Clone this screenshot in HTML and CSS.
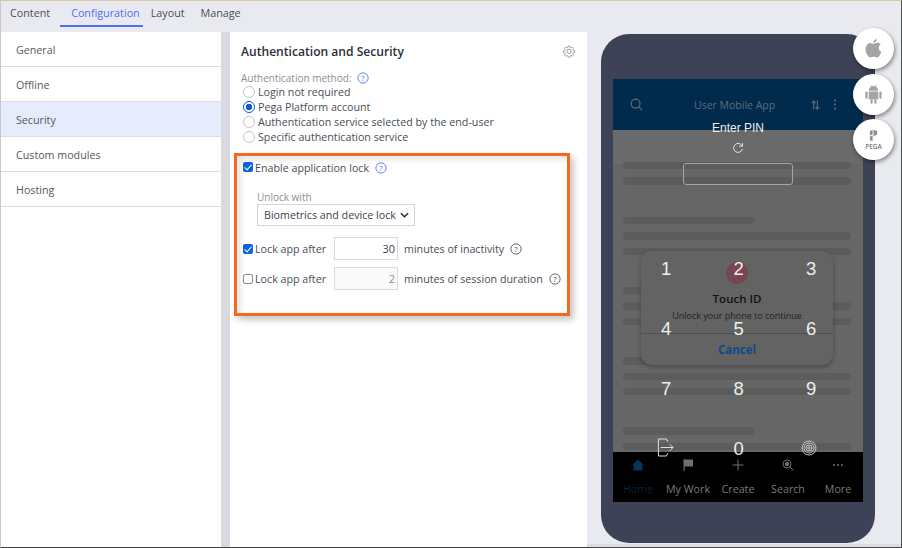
FILE: index.html
```html
<!DOCTYPE html>
<html lang="en">
<head>
    <meta charset="UTF-8">
    <title>Security</title>
    <link rel="stylesheet" href="styles.css">
</head>
<body>
    <div class="frame">
        <nav class="tabs">
            <a class="tab">Content</a>
            <a class="tab tab-active">Configuration</a>
            <a class="tab">Layout</a>
            <a class="tab">Manage</a>
        </nav>

        <div class="main">
            <ul class="side">
                <li>General</li>
                <li>Offline</li>
                <li class="side-active">Security</li>
                <li>Custom modules</li>
                <li>Hosting</li>
            </ul>

            <section class="panel">
                <div class="panel-head">
                    <h2>Authentication and Security</h2>
                    <svg class="gear" viewBox="0 0 24 24" fill="none" stroke="#8b8e96" stroke-width="1.5">
                        <path d="M10.3 2.5h3.4l.5 2.7 1.9.8 2.3-1.6 2.4 2.4-1.6 2.3.8 1.9 2.7.5v3.4l-2.7.5-.8 1.9 1.6 2.3-2.4 2.4-2.3-1.6-1.9.8-.5 2.7h-3.4l-.5-2.7-1.9-.8-2.3 1.6-2.4-2.4 1.6-2.3-.8-1.9-2.7-.5v-3.4l2.7-.5.8-1.9-1.6-2.3 2.4-2.4 2.3 1.6 1.9-.8z" transform="translate(1.2 1.2) scale(.9)"/>
                        <circle cx="12" cy="12.5" r="3.6"/>
                    </svg>
                </div>

                <div class="method-label">Authentication method:
                    <svg class="help help-blue" viewBox="0 0 14 14"><circle cx="7" cy="7" r="6"/><text x="7" y="10.2">?</text></svg>
                </div>
                <div class="radio-row"><span class="radio"></span>Login not required</div>
                <div class="radio-row"><span class="radio radio-on"></span>Pega Platform account</div>
                <div class="radio-row"><span class="radio"></span>Authentication service selected by the end-user</div>
                <div class="radio-row"><span class="radio"></span>Specific authentication service</div>

                <div class="lock-box">
                    <div class="check-row">
                        <span class="check check-on"></span>Enable application lock
                        <svg class="help help-blue help-gap" viewBox="0 0 14 14"><circle cx="7" cy="7" r="6"/><text x="7" y="10.2">?</text></svg>
                    </div>
                    <div class="unlock">
                        <div class="unlock-label">Unlock with</div>
                        <div class="select">Biometrics and device lock
                            <svg class="chev" viewBox="0 0 10 6"><path d="M1 1l4 4 4-4" fill="none" stroke="#1f2430" stroke-width="1.5"/></svg>
                        </div>
                    </div>
                    <div class="lock-row lock-first">
                        <span class="check check-on"></span><span class="lock-text">Lock app after</span>
                        <span class="num">30</span>
                        <span>minutes of inactivity</span>
                        <svg class="help help-dark" viewBox="0 0 14 14"><circle cx="7" cy="7" r="6"/><text x="7" y="10.2">?</text></svg>
                    </div>
                    <div class="lock-row">
                        <span class="check"></span><span class="lock-text">Lock app after</span>
                        <span class="num num-off">2</span>
                        <span>minutes of session duration</span>
                        <svg class="help help-dark" viewBox="0 0 14 14"><circle cx="7" cy="7" r="6"/><text x="7" y="10.2">?</text></svg>
                    </div>
                </div>
            </section>

            <section class="preview">
                <div class="phone">
                    <div class="screen">
                        <div class="app-bar">
                            <svg class="bar-search" viewBox="0 0 14 14" fill="none" stroke="#5d6b78" stroke-width="1.3"><circle cx="6" cy="6" r="4.8"/><path d="M9.5 9.5l3.500 3.500"/></svg>
                            <span class="app-title">User Mobile App</span>
                            <svg class="bar-sync" viewBox="0 0 10 12" fill="none" stroke="#5d6b78" stroke-width="1.2"><path d="M3 11V2M1 4l2-2.500L5 4M7 1v9M5 8l2 2.500L9 8"/></svg>
                            <svg class="bar-dots" viewBox="0 0 4 12" fill="#5d6b78"><circle cx="2" cy="1.500" r="1.100"/><circle cx="2" cy="6" r="1.100"/><circle cx="2" cy="10.500" r="1.100"/></svg>
                        </div>
                        <div class="page">
                            <div class="skeleton">
                                <i></i><i></i>
                                <i class="sk-short sk-gap"></i><i></i><i></i>
                                <i class="sk-short sk-gap"></i><i></i><i></i>
                                <i class="sk-short sk-gap"></i><i></i><i></i>
                                <i class="sk-short sk-gap"></i><i></i>
                            </div>
                        </div>
                        <div class="tabbar">
                            <div class="tb tb-home">
                                <svg viewBox="0 0 12 12" fill="#04365c"><path d="M6 .5L11.500 6H10.400v5.500H1.600V6H.5z"/></svg>
                                <span>Home</span>
                            </div>
                            <div class="tb">
                                <svg viewBox="0 0 12 12" fill="#6f6f6f"><path d="M1.500 0h1.200v12H1.500zM2.700 .5H11v7H2.700z"/></svg>
                                <span>My Work</span>
                            </div>
                            <div class="tb">
                                <svg viewBox="0 0 12 12" fill="#6f6f6f"><path d="M5.500 .5h1v5h5v1h-5v5h-1v-5h-5v-1h5z"/></svg>
                                <span>Create</span>
                            </div>
                            <div class="tb">
                                <svg viewBox="0 0 12 12" fill="none" stroke="#6f6f6f"><circle cx="5" cy="5" r="4"/><circle cx="5" cy="5" r="2.200" fill="#6f6f6f" stroke="none"/><path d="M8 8l3.500 3.500"/></svg>
                                <span>Search</span>
                            </div>
                            <div class="tb">
                                <svg viewBox="0 0 12 12" fill="#6f6f6f"><circle cx="2" cy="6" r="1"/><circle cx="6" cy="6" r="1"/><circle cx="10" cy="6" r="1"/></svg>
                                <span>More</span>
                            </div>
                        </div>

                        <div class="touch">
                            <span class="touch-dot"></span>
                            <div class="touch-title">Touch ID</div>
                            <div class="touch-sub">Unlock your phone to continue</div>
                            <div class="touch-cancel">Cancel</div>
                        </div>

                        <div class="pin">
                            <div class="pin-title">Enter PIN</div>
                            <svg class="pin-refresh" viewBox="0 0 12 12" fill="none" stroke="#e4e4e4" stroke-width="1"><path d="M10.200 4A4.500 4.500 0 1 0 10.500 7"/><path d="M10.500 1v3.300H7.200" stroke-width=".9"/></svg>
                            <div class="pin-input"></div>
                            <div class="keys">
                                <span>1</span><span>2</span><span>3</span>
                                <span>4</span><span>5</span><span>6</span>
                                <span>7</span><span>8</span><span>9</span>
                                <span>
                                    <svg class="key-exit" viewBox="0 0 18 20" fill="none" stroke="#e8e8e8" stroke-width="1"><path d="M10 1H1.500v18H10M10 1l1.500 3M10 19l1.500-3M4 10h13M13.500 6.500L17 10l-3.500 3.500"/></svg>
                                </span>
                                <span>0</span>
                                <span>
                                    <svg class="key-finger" viewBox="0 0 16 16" fill="none" stroke="#c4c4c4" stroke-width="1"><circle cx="8" cy="8" r="7"/><circle cx="8" cy="8" r="5"/><circle cx="8" cy="8" r="3"/><circle cx="8" cy="8" r="1.200"/></svg>
                                </span>
                            </div>
                        </div>
                    </div>
                </div>

                <div class="os-list">
                    <div class="os">
                        <svg class="os-apple" viewBox="0 0 16 18" fill="#a4a4a4"><path d="M11.200 0c.1 1.800-1.500 3.700-3.400 3.600C7.600 1.900 9.400.1 11.200 0zM8 4.500c.8 0 2-1 3.500-1 1.200 0 2.500.6 3.300 1.800-2.800 1.700-2.300 5.700.7 6.900-.8 2-2.500 5.300-4.300 5.300-1.100 0-1.600-.7-3-.7s-1.900.7-3 .7C3 17.500.5 13.500.5 9.800.5 6 2.900 3.700 5 3.700c1.200 0 2.200.8 3 .8z"/></svg>
                    </div>
                    <div class="os">
                        <svg class="os-android" viewBox="0 0 16 18" fill="#a4a4a4"><path d="M3.500 6a4.500 4.500 0 0 1 9 0zM3.500 6.700h9v7.300h-1.700v3.200a1 1 0 0 1-2 0V14H7.200v3.200a1 1 0 0 1-2 0V14H3.500zM1.300 6.700a1 1 0 0 1 1.200 1v4.600a1 1 0 0 1-2.200 0V7.700a1 1 0 0 1 1-1zM14.700 6.700a1 1 0 0 1 1 1v4.600a1 1 0 0 1-2.200 0V7.700a1 1 0 0 1 1.200-1z"/><path d="M5 .3l1.200 2M11 .3L9.800 2.300" stroke="#a4a4a4" stroke-width=".7"/></svg>
                    </div>
                    <div class="os os-pega">
                        <svg class="os-p" viewBox="0 0 10 14" fill="#8f8f9c"><path d="M1 2l3-1.500V6L1 7zM5 .5L9 2v4L5 8zM1 8l3-1v6.500L1 12z"/></svg>
                        <span>PEGA</span>
                    </div>
                </div>
            </section>
        </div>
    </div>
</body>
</html>
```

FILE: styles.css
```css
* {
    box-sizing: border-box;
}
html, body {
    margin: 0;
    height: 100%;
}
body {
    font-family: "Open Sans", Arial, sans-serif;
    font-size: 10.7px;
    color: #4a4d57;
    background-color: #e9eaf0;
    overflow: hidden;
}
.frame {
    width: 902px;
    height: 548px;
    display: flex;
    flex-direction: column;
    border-top: 1px solid #d9c9a0;
    border-right: 1px solid #555;
    border-bottom: 1px solid #444;
    border-left: 1px solid #c8c8c8;
}

/* top tabs */
.tabs {
    height: 31px;
    display: flex;
    padding-left: 9px;
    font-size: 10.75px;
}
.tab {
    padding-top: 5px;
    height: 25.5px;
    margin-right: 16px;
}
.tab-active {
    color: #4f6df5;
    padding: 5px 3px 0 11px;
    margin-left: -6px;
    margin-right: 8px;
    border-bottom: 2px solid #4f6df5;
}

.main {
    flex: 1;
    display: flex;
    min-height: 0;
}

/* left list */
.side {
    width: 220px;
    margin: 0;
    padding: 0;
    list-style: none;
    background: #fff;
    color: #555862;
}
.side li {
    height: 35px;
    line-height: 36px;
    padding-left: 15px;
    border-bottom: 1px solid #dcdde2;
}
.side .side-active {
    background: #e6ecfb;
}

/* middle panel */
.panel {
    width: 357px;
    margin-left: 9px;
    background: #fff;
    padding: 0 11px;
    box-shadow: -9px 0 0 #d9dadf;
}
.panel-head {
    display: flex;
    justify-content: space-between;
    align-items: center;
    padding-top: 5px;
    height: 33px;
}
.panel-head h2 {
    margin: 0;
    font-size: 12.1px;
    font-weight: 600;
    color: #2b2e3a;
}
.gear {
    width: 14px;
    height: 14px;
}
.method-label {
    margin-top: 7px;
    font-size: 10px;
    color: #8c8e94;
    display: flex;
    align-items: center;
    gap: 5px;
    height: 12px;
}
.help {
    width: 12px;
    height: 12px;
    flex: none;
}
.help circle {
    fill: none;
    stroke-width: 1;
}
.help text {
    font-family: "Open Sans", Arial, sans-serif;
    font-size: 9px;
    text-anchor: middle;
}
.help-blue circle {
    stroke: #4f6df5;
}
.help-blue text {
    fill: #4f6df5;
}
.help-dark circle {
    stroke: #4a4d57;
}
.help-dark text {
    fill: #4a4d57;
}
.help-gap {
    margin-left: 6px;
}
.radio-row {
    height: 15px;
    display: flex;
    align-items: center;
    color: #4a4d57;
}
.radio {
    width: 12px;
    height: 12px;
    margin: 0 3px 0 2px;
    border: 1px solid #c4c5ca;
    border-radius: 50%;
    background: #fff;
}
.radio-on {
    border-color: #0a5fd8;
    background: radial-gradient(circle, #0a5fd8 0 3px, #fff 3.500px);
}

/* orange box */
.lock-box {
    margin: 9px 0 0 -7px;
    width: 336px;
    height: 163px;
    border: 3px solid #f26a21;
    box-shadow: 4px 4px 6px rgba(0, 0, 0, .22), inset 3px 3px 6px rgba(0, 0, 0, .12);
    padding: 3px 6px 0;
    white-space: nowrap;
}
.check-row {
    display: flex;
    align-items: center;
    height: 18px;
}
.check-row .check {
    margin-top: -3px;
}
.check {
    width: 10px;
    height: 10px;
    flex: none;
    margin-right: 2px;
    border: 1px solid #8a8a8a;
    border-radius: 2px;
    background: #fff;
    position: relative;
}
.check-on {
    border: none;
    background: #0a63e0;
}
.check-on::after {
    content: "";
    position: absolute;
    left: 3px;
    top: 1px;
    width: 3px;
    height: 6px;
    border: solid #fff;
    border-width: 0 1.500px 1.500px 0;
    transform: rotate(42deg);
}
.unlock {
    margin: 14px 0 0 14px;
}
.unlock-label {
    font-size: 10px;
    color: #8c8e94;
    line-height: 13px;
}
.select {
    width: 158px;
    height: 22px;
    padding: 0 5px 0 6px;
    border: 1px solid #d4d5d9;
    display: flex;
    align-items: center;
    justify-content: space-between;
    color: #3f424c;
}
.chev {
    width: 9px;
    height: 6px;
}
.lock-row {
    display: flex;
    align-items: center;
    height: 23px;
    margin-top: 7px;
}
.lock-first {
    margin-top: 11px;
}
.lock-text {
    width: 79px;
}
.num {
    width: 64px;
    height: 23px;
    margin-right: 6px;
    border: 1px solid #d9dade;
    text-align: right;
    line-height: 21px;
    padding-right: 2px;
    font-size: 11px;
    color: #3f424c;
}
.num-off {
    color: #8c8e94;
    background: #fafafa;
}
.lock-row .help {
    margin-left: 6px;
}

/* phone preview */
.preview {
    flex: 1;
    position: relative;
    border-bottom: 3px solid #dcdde2;
}
.phone {
    margin: 2px 0 0 14px;
    width: 274px;
    height: 509px;
    border-radius: 28px;
    background: #3d4256;
    padding: 45px 12px 0;
}
.screen {
    width: 250px;
    height: 423px;
    display: flex;
    flex-direction: column;
    position: relative;
    overflow: hidden;
}
.app-bar {
    height: 51px;
    background: #002b4d;
    display: flex;
    align-items: center;
    padding: 0 0 0 17px;
    color: #5f6d7b;
}
.bar-search {
    width: 13px;
    height: 13px;
}
.app-title {
    margin-left: 51px;
    width: 117px;
    font-size: 10.5px;
}
.bar-sync {
    width: 9px;
    height: 12px;
}
.bar-dots {
    width: 4px;
    height: 11px;
    margin-left: 13px;
}
.page {
    flex: 1;
    background: linear-gradient(#6a6a6a 0 34px, #666 34px);
    overflow: hidden;
    padding: 32px 12px 0 10px;
}
.skeleton {
    display: flex;
    flex-direction: column;
    gap: 8px;
}
.skeleton i {
    display: block;
    height: 7.4px;
    border-radius: 4px;
    background: #5c5c5c;
}
.skeleton .sk-short {
    width: 131px;
}
.skeleton .sk-gap {
    margin-top: 24px;
}
.tabbar {
    height: 50px;
    background: #000;
    display: flex;
    color: #7b7b7b;
}
.tb {
    width: 50px;
    display: flex;
    flex-direction: column;
    align-items: center;
    padding-top: 7px;
    gap: 11px;
    white-space: nowrap;
}
.tb svg {
    width: 12px;
    height: 12px;
}
.tb-home {
    color: #04223a;
}

/* dialogs laid over the phone screen */
.touch {
    position: absolute;
    left: 28px;
    top: 172px;
    width: 192px;
    height: 114px;
    border-radius: 11px;
    background: #636363;
    box-shadow: 0 2px 5px rgba(0, 0, 0, .3);
    display: flex;
    flex-direction: column;
    align-items: center;
    padding-top: 40px;
    color: #111;
}
.touch-dot {
    position: absolute;
    left: 85px;
    top: 11px;
    width: 22px;
    height: 22px;
    border-radius: 50%;
    background: #7a4552;
}
.touch-title {
    font-size: 11.5px;
    font-weight: 600;
    line-height: 16px;
}
.touch-sub {
    font-size: 9px;
    margin-top: 1px;
    line-height: 15px;
    color: #222;
}
.touch-cancel {
    align-self: stretch;
    text-align: center;
    margin-top: 10px;
    border-top: 1px solid #4f4f4f;
    padding-top: 8px;
    font-size: 11.5px;
    font-weight: 700;
    color: #0c4a8c;
}
.pin {
    position: absolute;
    left: 0;
    top: 0;
    width: 250px;
    text-align: center;
    color: #eee;
    font-family: "Liberation Sans", Arial, sans-serif;
}
.pin-title {
    margin-top: 42px;
    font-size: 12px;
    line-height: 14px;
}
.pin-refresh {
    display: block;
    width: 12px;
    height: 12px;
    margin: 7px auto 0;
}
.pin-input {
    width: 110px;
    height: 22px;
    margin: 9px 0 0 70px;
    border: 1px solid #a5a5a5;
    border-radius: 3px;
}
.keys {
    display: grid;
    grid-template-columns: repeat(3, 72.5px);
    grid-auto-rows: 60px;
    margin: 84px 0 0 17px;
    font-size: 18.5px;
    line-height: 60px;
    justify-items: center;
}
.keys span {
    display: block;
    width: 30px;
    height: 60px;
    position: relative;
    top: -30px;
}
.key-exit {
    position: absolute;
    left: 6px;
    top: 19px;
    width: 17px;
    height: 19px;
}
.key-finger {
    position: absolute;
    left: 5px;
    top: 21px;
    width: 16px;
    height: 16px;
}

/* platform buttons */
.os-list {
    position: absolute;
    left: 266px;
    top: -4px;
    display: flex;
    flex-direction: column;
    gap: 4.5px;
}
.os {
    width: 41px;
    height: 41px;
    border-radius: 50%;
    background: #fff;
    box-shadow: 1px 2px 4px rgba(0, 0, 0, .45);
    display: flex;
    flex-direction: column;
    align-items: center;
    justify-content: center;
}
.os-apple {
    width: 17px;
    height: 19px;
}
.os-android {
    width: 17px;
    height: 20px;
}
.os-p {
    width: 9px;
    height: 13px;
}
.os-pega span {
    font-size: 6.5px;
    font-weight: 600;
    color: #777;
    line-height: 9px;
}
```
